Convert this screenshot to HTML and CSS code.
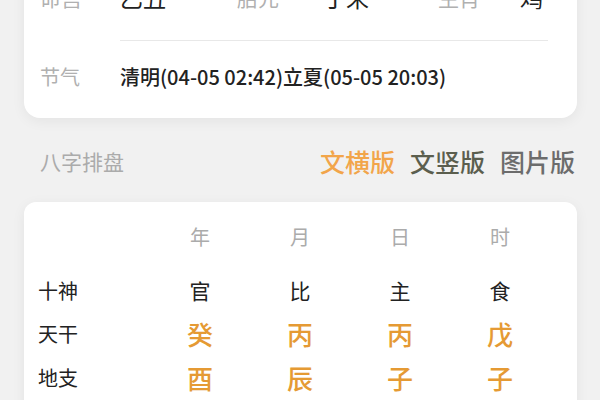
FILE: index.html
```html
<!DOCTYPE html>
<html lang="zh">
<head>
<meta charset="utf-8">
<link rel="stylesheet" href="styles.css">
</head>
<body>
<div class="page">
  <section class="card info">
    <div class="row top">
      <span class="lbl w80">命宫</span><span class="val w117">乙丑</span>
      <span class="lbl w86">胎元</span><span class="val w115">丁未</span>
      <span class="lbl w82">生肖</span><span class="val">鸡</span>
    </div>
    <div class="divider"></div>
    <div class="row jieqi">
      <span class="lbl w80">节气</span><span class="val">清明(04-05 02:42)立夏(05-05 20:03)</span>
    </div>
  </section>

  <div class="sec-head">
    <span class="sec-title">八字排盘</span>
    <div class="tabs">
      <span class="tab active">文横版</span>
      <span class="tab dark">文竖版</span>
      <span class="tab gray">图片版</span>
    </div>
  </div>

  <section class="card chart">
    <div class="grid head">
      <span></span><span>年</span><span>月</span><span>日</span><span>时</span>
    </div>
    <div class="grid shishen">
      <span class="rl">十神</span><span>官</span><span>比</span><span>主</span><span>食</span>
    </div>
    <div class="grid gz">
      <span class="rl">天干</span><span class="o">癸</span><span class="o">丙</span><span class="o">丙</span><span class="o">戊</span>
    </div>
    <div class="grid gz">
      <span class="rl">地支</span><span class="o">酉</span><span class="o">辰</span><span class="o">子</span><span class="o">子</span>
    </div>
  </section>
</div>
</body>
</html>
```

FILE: styles.css
```css
* { box-sizing: border-box; }
html, body { margin: 0; padding: 0; }
body {
  background: #f1f1f1;
  font-family: "Noto Sans CJK SC", "Noto Sans", sans-serif;
  color: #222;
  width: 600px;
  height: 400px;
  overflow: hidden;
}
.page { padding: 0 23px 0 24px; }
.card {
  background: #fff;
  border-radius: 16px;
  box-shadow: 0 3px 14px rgba(0,0,0,0.06);
}
.info {
  margin-top: -30px;
  padding: 12px 16px 29px 16px;
}
.row { display: flex; align-items: center; white-space: nowrap; }
.lbl { color: #b0b0b0; font-size: 20px; }
.val { color: #222; }
.top { height: 30px; margin-bottom: 28px; font-size: 23px; }
.top .lbl { font-size: 21px; }
.top .val { font-size: 23px; }
.w80 { width: 80px; flex: none; }
.w117 { width: 117px; flex: none; }
.w86 { width: 86px; flex: none; }
.w115 { width: 115px; flex: none; }
.w82 { width: 82px; flex: none; }
.divider {
  height: 1px;
  background: #e8e8e8;
  margin: 0 13px 0 80px;
}
.jieqi { height: 24px; margin-top: 23px; margin-bottom: 1px; }
.jieqi .val { font-size: 20px; font-weight: 500; }

.sec-head {
  display: flex;
  align-items: center;
  justify-content: space-between;
  height: 84px;
  padding: 28px 2px 26px 16px;
}
.sec-title { font-size: 21px; color: #ababab; line-height: 30px; }
.tabs { display: flex; gap: 15px; }
.tab { font-size: 25px; font-weight: 500; line-height: 30px; }
.tab.active { color: #f2a54a; }
.tab.dark { color: #5b5e4e; }
.tab.gray { color: #6c6c6c; }

.chart {
  border-radius: 12px;
  padding: 19px 0 0 14px;
  height: 220px;
}
.grid {
  display: grid;
  grid-template-columns: 112px 100px 100px 100px 100px;
  align-items: center;
}
.grid span { text-align: center; }
.grid .rl { text-align: left; font-size: 20px; color: #222; }
.head { height: 30px; margin-bottom: 18px; font-size: 20px; color: #ababab; }
.shishen { height: 42px; font-size: 21px; color: #222; }
.gz { height: 44px; font-size: 26px; }
.gz .o { color: #e59a34; font-weight: 500; }
```
